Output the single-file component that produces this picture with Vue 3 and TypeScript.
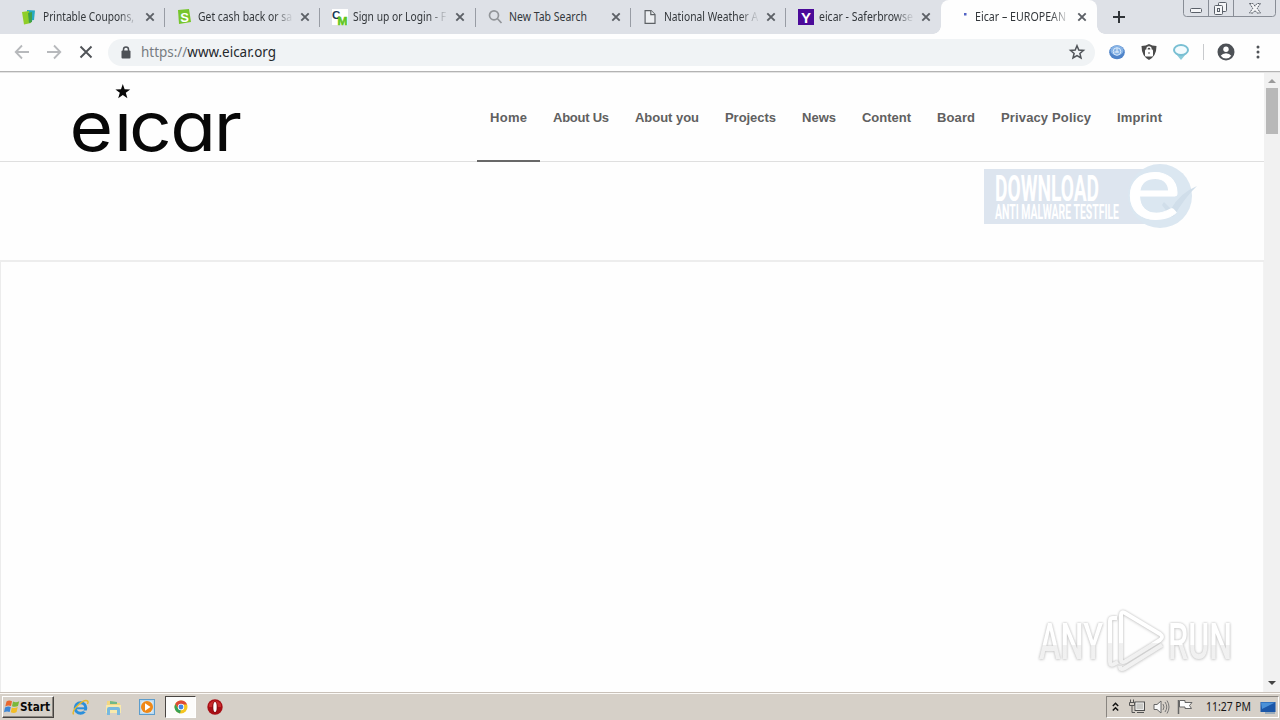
<script setup lang="ts">
interface Tab { icon: string; title: string; w: number; fade: boolean }
interface NavItem { label: string; w: number; active?: boolean }

const tabs: Tab[] = [
  { icon: 'coupon', title: 'Printable Coupons,', w: 91, fade: true },
  { icon: 'cash', title: 'Get cash back or sa', w: 94, fade: true },
  { icon: 'cm', title: 'Sign up or Login - F', w: 93, fade: true },
  { icon: 'search', title: 'New Tab Search', w: 78, fade: false },
  { icon: 'page', title: 'National Weather A', w: 94, fade: true },
  { icon: 'yahoo', title: 'eicar - Saferbrowse', w: 94, fade: true },
]
const nav: NavItem[] = [
  { label: 'Home', w: 37, active: true },
  { label: 'About Us', w: 56 },
  { label: 'About you', w: 64 },
  { label: 'Projects', w: 51 },
  { label: 'News', w: 34 },
  { label: 'Content', w: 49 },
  { label: 'Board', w: 38 },
  { label: 'Privacy Policy', w: 90 },
  { label: 'Imprint', w: 45 },
]
</script>

<template>
  <div class="screen">
    <header class="strip">
      <div v-for="t in tabs" :key="t.icon" class="tab">
        <svg class="fav" width="16" height="16" viewBox="0 0 16 16">
          <g v-if="t.icon === 'coupon'">
            <path d="M5 1 13 1.500 12 11 5 12Z" fill="#27a9c0" />
            <path d="M0 3 7 2 9 14 2 15.500Z" fill="#8fce28" />
            <path d="M6 4 10 3 10 13 7 14Z" fill="#3ea04b" />
          </g>
          <g v-else-if="t.icon === 'cash'">
            <path d="M1 1 12 0 14 13 2 15Z" fill="#76c62d" />
            <text x="7.500" y="12.500" text-anchor="middle" class="ico-t" font-size="13" fill="#fff">S</text>
          </g>
          <g v-else-if="t.icon === 'cm'">
            <rect width="16" height="16" fill="#fff" />
            <text x="0" y="9.500" class="ico-t" font-size="11.500" fill="#173a58">C</text>
            <text x="5.500" y="15.500" class="ico-t thick" font-size="11" fill="#5ec51c" textLength="10" lengthAdjust="spacingAndGlyphs">M</text>
          </g>
          <g v-else-if="t.icon === 'search'" fill="none" stroke="#929599" stroke-width="1.700">
            <circle cx="6" cy="6.300" r="4.500" /><path d="M9.300 9.500 13.500 14" />
          </g>
          <g v-else-if="t.icon === 'page'" fill="#eceef1" stroke="#5d6165" stroke-width="1.200">
            <path d="M2.100 1.600H8L12 5.500V14.400H2.100Z" /><path d="M7.800 1.600V5.700H12" />
          </g>
          <g v-else>
            <rect width="16" height="16" fill="#4b0a99" />
            <text x="8" y="13.500" text-anchor="middle" class="ico-t" font-size="15" fill="#fff">Y</text>
          </g>
        </svg>
        <svg class="title" :class="{ fade: t.fade }" width="94" height="18">
          <text x="0" y="13" :textLength="t.w" lengthAdjust="spacingAndGlyphs">{{ t.title }}</text>
        </svg>
        <svg class="close" width="10" height="10" viewBox="0 0 10 10"><path d="M1.300 1.300 8.700 8.700M8.700 1.300 1.300 8.700" /></svg>
      </div>
      <div class="tab active">
        <svg class="fav" width="16" height="16"><rect x="10" y="4" width="2.500" height="2.500" fill="#5263c4" /></svg>
        <svg class="title fade" width="94" height="18">
          <text x="0" y="13" textLength="91" lengthAdjust="spacingAndGlyphs">Eicar – EUROPEAN</text>
        </svg>
        <svg class="close" width="10" height="10" viewBox="0 0 10 10"><path d="M1.300 1.300 8.700 8.700M8.700 1.300 1.300 8.700" /></svg>
      </div>
      <svg class="plus" width="14" height="14" viewBox="0 0 14 14"><path d="M7 1V13M1 7H13" stroke="#303438" stroke-width="2" /></svg>
      <svg class="winctl" width="94" height="17" viewBox="0 0 94 17">
        <path d="M.5 0V13.500Q.5 16.500 3.500 16.500H89.500Q92.500 16.500 92.500 13.500V0M25.500 0V16M50.500 0V16" fill="none" stroke="#888d96" />
        <g fill="#f4f5f7" stroke="#5a6069">
          <rect x="7.500" y="8.500" width="11" height="4" rx="1" />
          <rect x="35.500" y="2.500" width="8" height="9" rx="1" />
          <rect x="31.500" y="5.500" width="8" height="9" rx="1" /><rect x="34.500" y="8.500" width="2" height="3" />
          <path d="M66.500 3.500H70L72 6.200 74 3.500H77.500L74.200 8.200 77.500 13H74L72 10.500 70 13H66.500L69.800 8.200Z" stroke-dasharray="2 .7" />
        </g>
      </svg>
    </header>

    <div class="toolbar">
      <svg class="back" width="16" height="16" viewBox="0 0 16 16"><path d="M15 8H2M8 1.500 1.700 8 8 14.500" fill="none" stroke="#b7b9bc" stroke-width="1.800" /></svg>
      <svg class="fwd" width="16" height="16" viewBox="0 0 16 16"><path d="M1 8H14M8 1.500 14.300 8 8 14.500" fill="none" stroke="#b7b9bc" stroke-width="1.800" /></svg>
      <svg class="stop" width="14" height="14" viewBox="0 0 14 14"><path d="M1.500 1.500 12.500 12.500M12.500 1.500 1.500 12.500" stroke="#505357" stroke-width="1.900" /></svg>
      <div class="omni">
        <svg class="lock" width="10" height="13" viewBox="0 0 10 13"><path d="M2.500 5V3.500Q2.500 1 5 1T7.500 3.500V5" fill="none" stroke="#4d5156" stroke-width="1.500" /><rect x=".5" y="4.500" width="9" height="8" rx="1" fill="#4d5156" /></svg>
        <svg class="url" width="140" height="22">
          <text x="0" y="16" textLength="135" lengthAdjust="spacingAndGlyphs"><tspan fill="#777c81">https://</tspan><tspan fill="#25282c">www.eicar.org</tspan></text>
        </svg>
        <svg class="star" width="16" height="16" viewBox="0 0 16 16"><path d="M8 1.700 9.800 6 14.500 6.400 10.900 9.500 12 14 8 11.600 4 14 5.100 9.500 1.500 6.400 6.200 6Z" fill="none" stroke="#505459" stroke-width="1.500" /></svg>
      </div>
      <svg class="ext" width="16" height="16" viewBox="0 0 16 16">
        <ellipse cx="8" cy="8.300" rx="7.800" ry="7" fill="#4f84c9" /><ellipse cx="8" cy="6.500" rx="6.500" ry="5" fill="#85b2e5" />
        <circle cx="8" cy="7.500" r="3.800" fill="none" stroke="#d9eafb" /><path d="M8 4V8.500M5.500 8H10" stroke="#e8f3fc" />
      </svg>
      <svg class="ext" width="16" height="16" viewBox="0 0 16 16">
        <path d="M.5 2Q5 2 8 0 11 2 15.500 2 15.500 12 8 16 .5 12 .5 2Z" fill="#4b4b4b" />
        <rect x="4" y="5.500" width="8" height="7" rx="1" fill="#fff" /><path d="M6 7V5Q6 3 8 3T10 5V7" fill="none" stroke="#fff" stroke-width="1.300" /><path d="M8 8V10" stroke="#555" />
      </svg>
      <svg class="ext" width="16" height="16" viewBox="0 0 16 16">
        <path d="M3 10H13L8 16Z" fill="#8bcbd9" /><ellipse cx="8" cy="6" rx="7" ry="4.900" fill="#f3fbfe" stroke="#79bfd3" stroke-width="2" />
      </svg>
      <i class="divider"></i>
      <svg class="avatar" width="18" height="18" viewBox="0 0 18 18"><circle cx="9" cy="9" r="8.500" fill="#4d5156" /><circle cx="9" cy="6.300" r="2.700" fill="#fff" /><path d="M3.700 12.700Q5.500 10.200 9 10.200T14.300 12.700Q12.300 15.500 9 15.500T3.700 12.700Z" fill="#fff" /></svg>
      <svg class="dots" width="4" height="14"><g fill="#505357"><circle cx="2" cy="2" r="1.500" /><circle cx="2" cy="7" r="1.500" /><circle cx="2" cy="12" r="1.500" /></g></svg>
    </div>

    <div class="view">
      <main class="page">
        <div class="site-head">
          <svg class="logo" width="190" height="84" viewBox="0 0 190 84">
            <text class="word" transform="scale(1.1 1)" y="78.500" x="8.700 49.200 62.800 100.200 139.800">eicar</text>
            <rect x="54" y="20" width="17" height="21" fill="#fefefe" />
            <path d="M62.800 11 64.600 16.300 70.200 16.400 65.800 19.800 67.400 25.200 62.800 22 58.200 25.200 59.800 19.800 55.400 16.400 61 16.300Z" fill="#080808" />
          </svg>
          <nav>
            <a v-for="n in nav" :key="n.label" :class="{ on: n.active }">
              <svg :width="n.w" height="20"><text x="0" y="14" :textLength="n.w" lengthAdjust="spacing">{{ n.label }}</text></svg>
            </a>
          </nav>
        </div>
        <div class="banner">
          <svg class="download" width="216" height="68" viewBox="0 0 216 68">
            <rect x="0" y="7" width="180" height="55" fill="#dde5ef" />
            <circle cx="176" cy="34" r="32" fill="#dbe7f1" />
            <path d="M180 40 187 47Q196 31 213 24 202 34 190 54L187 55 178 43Z" fill="#d0deea" />
            <g fill="#fff" class="dl">
              <text transform="translate(11 39) scale(1 1.900)" font-size="19" textLength="104" lengthAdjust="spacingAndGlyphs">DOWNLOAD</text>
              <text transform="translate(11 57) scale(1 1.550)" font-size="12.500" textLength="124" lengthAdjust="spacingAndGlyphs">ANTI MALWARE TESTFILE</text>
              <text class="big-e" transform="translate(142 56.500) scale(1 1.120)" font-size="82" textLength="55" lengthAdjust="spacingAndGlyphs">e</text>
            </g>
          </svg>
        </div>
        <div class="slider"></div>
      </main>
      <aside class="scroll">
        <svg width="8" height="5"><path d="M0 5 4 1 8 5Z" fill="#9a9a9a" /></svg>
        <i class="thumb"></i>
        <svg width="8" height="5"><path d="M0 0H8L4 4Z" fill="#444" /></svg>
      </aside>
    </div>

    <footer class="taskbar">
      <div class="start">
        <svg width="16" height="16" viewBox="0 0 16 16">
          <path d="M2.500 2.500Q5 .8 8 2.300L7 7Q4 6 1.300 7.500Z" fill="#e9682e" />
          <path d="M9 2.500Q12 4 15.200 2.300L14 7Q11 8.500 8 7.200Z" fill="#7ab83a" />
          <path d="M1 8.500Q4 7 6.800 8L5.700 13Q3 12 0 13.200Z" fill="#3d86d5" />
          <path d="M7.800 8.400Q10.500 9.700 13.700 8.100L12.600 13Q10 14.600 6.800 13.300Z" fill="#f3bd25" />
        </svg>
        <svg width="31" height="16"><text x="0" y="12" textLength="30" lengthAdjust="spacingAndGlyphs">Start</text></svg>
      </div>
      <svg class="app ie" width="17" height="17" viewBox="0 0 17 17">
        <circle cx="8.500" cy="9" r="5.300" fill="none" stroke="#2b8fdb" stroke-width="3" /><path d="M4 9.300H14" stroke="#2b8fdb" stroke-width="2" /><path d="M10 11.500H15V14Z" fill="#d6d0c8" />
        <path d="M1.500 15.500C-1 11 12-1 15.800 2.200 16.500 3 16 4 15.500 5" fill="none" stroke="#e7b92d" stroke-width="1.500" />
      </svg>
      <svg class="app folder" width="17" height="17" viewBox="0 0 17 17">
        <path d="M2 2H8L9 4H15V13H2Z" fill="#f2d783" /><path d="M1 6H16V14H1Z" fill="#f8e9ac" /><path d="M5 2V5H12V3Z" fill="#71b888" />
        <path d="M2 16V10Q2 8 4 8H13Q15 8 15 10V16H12V11H5V16Z" fill="#78b9df" />
      </svg>
      <svg class="app media" width="17" height="17" viewBox="0 0 17 17">
        <rect x=".5" y=".5" width="15" height="15" fill="#b9d9f0" stroke="#5d9dcc" /><rect x="2.500" y="2.500" width="11" height="11" fill="#e9f3f8" />
        <circle cx="8" cy="8" r="6" fill="#ef8817" /><path d="M6 4.300 11.500 8 6 11.700Z" fill="#fff" />
      </svg>
      <div class="pressed">
        <svg width="14" height="14" viewBox="0 0 14 14">
          <circle cx="7" cy="7" r="6.500" fill="#f5c51f" /><path d="M1.200 4A6.500 6.500 0 0 1 13 4.500H7L4.500 8.500Z" fill="#dd4936" />
          <path d="M1.200 4 4.500 9 7 9.500 6 13.400A6.500 6.500 0 0 1 1.200 4Z" fill="#37a156" /><circle cx="7" cy="7" r="3.200" fill="#fff" /><circle cx="7" cy="7" r="2.400" fill="#4285e4" />
        </svg>
      </div>
      <svg class="app opera" width="16" height="16" viewBox="0 0 16 16"><circle cx="8" cy="8" r="7.700" fill="#a80e15" /><path d="M2 5Q8-2 14 5V8H2Z" fill="#c92b2d" /><ellipse cx="8" cy="8" rx="2.800" ry="5.800" fill="#811013" /><ellipse cx="8" cy="8" rx="1.700" ry="5" fill="#fff" /></svg>
      <div class="tray">
        <svg class="chev" width="7" height="10" viewBox="0 0 7 10"><path d="M.8 4 3.500 1.300 6.200 4M.8 8.500 3.500 5.800 6.200 8.500" fill="none" stroke="#111" stroke-width="1.500" /></svg>
        <svg class="net" width="18" height="16" viewBox="0 0 18 16">
          <rect x="6" y="3" width="9.500" height="8.500" fill="#c9c9c6" stroke="#4e4e4e" /><rect x="7" y="4" width="7.500" height="6.500" fill="none" stroke="#f8f8f8" stroke-width=".7" />
          <path d="M1.500 .5V3M4.500 .5V3M.5 3.500H5.500V6.500H.5ZM3 7V13.500H6M8 13.500H15" fill="none" stroke="#555" />
        </svg>
        <svg class="vol" width="17" height="16" viewBox="0 0 17 16"><path d="M1 5.500H4L8 2V14L4 10.500H1Z" fill="#f7f7f7" stroke="#666" /><path d="M10 5Q12 8 10 11M12 3Q15.500 8 12 13M14 1.500Q18 8 14 14.500" fill="none" stroke="#777" /></svg>
        <svg class="flag" width="17" height="16" viewBox="0 0 17 16"><path d="M1.500 1V15" stroke="#666" stroke-width="1.500" /><path d="M2.500 1.500H8V3.500H15L12.500 6.500 14.500 9.500H8V8H2.500Z" fill="#fbfbfb" stroke="#666" /></svg>
        <svg class="clock" width="46" height="16"><text x="0" y="12" textLength="45" lengthAdjust="spacingAndGlyphs">11:27 PM</text></svg>
        <svg class="desk" width="16" height="13" viewBox="0 0 16 13"><rect x=".5" y="1" width="15" height="10" fill="#1c57a8" /><path d="M1 1.500H15L2 8Z" fill="#4b91d8" /><path d="M5 12H15" stroke="#5f87ad" /></svg>
      </div>
    </footer>

    <svg class="mark" width="206" height="70" viewBox="0 0 206 70">
      <defs>
        <linearGradient id="mg" x1="0" y1="0" x2="0" y2="1">
          <stop offset="0" stop-color="#fff" /><stop offset=".54" stop-color="#fff" /><stop offset=".55" stop-color="#f0f0f0" /><stop offset="1" stop-color="#f2f2f2" />
        </linearGradient>
      </defs>
      <g class="brand">
        <text transform="translate(6 54) scale(1 1.450)" font-size="35" textLength="64" lengthAdjust="spacingAndGlyphs">ANY</text>
        <text transform="translate(135 54) scale(1 1.450)" font-size="35" textLength="64" lengthAdjust="spacingAndGlyphs">RUN</text>
        <path d="M84 13H80Q77 13 77 16V57Q77 61 81 59L85 57M88 10Q88 6 92 8L127 29Q131 32 127 35L93 56Q88 59 88 54ZM129 40 92 63Q87 66 87 61" fill="none" stroke="url(#mg)" stroke-width="4" stroke-linejoin="round" />
      </g>
    </svg>
  </div>
</template>

<style>
body { overflow: hidden; background: #fff; }
</style>
<style scoped>
.screen { position: relative; width: 1280px; height: 720px; display: flex; flex-direction: column; background: #fefefe; font-family: "Liberation Sans", Arial, sans-serif; overflow: hidden; }
svg { display: block; flex: none; overflow: visible; }
.ico-t { font-family: "Liberation Sans", sans-serif; font-weight: 700; }
.thick { stroke: #5ec51c; stroke-width: .5; }
.strip { height: 34px; flex: none; background: #dee1e7; display: flex; padding-left: 9px; }
.tab { width: 155.400px; flex: none; box-sizing: border-box; height: 34px; padding-left: 12.500px; display: flex; align-items: center; position: relative; }
.tab:not(.active):not(:nth-child(6))::after { content: ""; position: absolute; right: -.5px; top: 8px; height: 19px; width: 1px; background: #989ca4; }
.title { margin-left: 5px; font-family: "Noto Sans", "DejaVu Sans", sans-serif; font-size: 11.800px; fill: #33373b; }
.fade { mask-image: linear-gradient(90deg, #000 76px, rgba(0,0,0,.15) 92px); }
.close { margin-left: 8px; stroke: #5c6066; stroke-width: 1.900; }
.active { background: #fefefe; border-radius: 8px 8px 0 0; width: 156px; }
.active::before, .active::after { content: ""; position: absolute; width: 8px; height: 8px; bottom: 0; }
.active::before { left: -8px; background: radial-gradient(circle at 0 0, transparent 7.500px, #fefefe 8px); }
.active::after { right: -8px; background: radial-gradient(circle at 100% 0, transparent 7.500px, #fefefe 8px); }
.plus { margin: 10px 0 0 15px; }
.winctl { margin-left: 57px; }
.toolbar { height: 36px; flex: none; padding-bottom: 1px; border-bottom: 1px solid #b3b3b3; box-shadow: 0 1px #e4e4e4; display: flex; align-items: center; position: relative; z-index: 1; }
.back { margin-left: 14px; }
.fwd { margin-left: 16px; }
.stop { margin-left: 17px; }
.omni { margin-left: 15px; width: 987px; height: 27px; border-radius: 14px; background: #f0f3f5; display: flex; align-items: center; }
.lock { margin-left: 13px; }
.url { margin-left: 10px; font: 15px "Noto Sans", sans-serif; }
.star { margin-left: auto; margin-right: 10px; }
.ext { margin-left: 14px; }
.ext + .ext { margin-left: 16px; }
.divider { width: 1px; height: 16px; background: #c8cacd; margin-left: 14px; }
.avatar { margin-left: 13px; }
.dots { margin-left: 21px; }
.view { height: 620px; flex: none; display: flex; }
.page { width: 1264px; display: flex; flex-direction: column; }
.site-head { height: 90px; box-sizing: border-box; flex: none; border-bottom: 1px solid #dfdfdf; display: flex; }
.logo { margin-left: 60px; margin-top: 1px; }
.word { font-family: Inter, sans-serif; font-weight: 400; font-size: 68px; fill: #080808; font-feature-settings: "cv11"; }
nav { margin-left: 227px; display: flex; }
nav a { padding: 36px 13px 0; height: 54px; font-size: 13px; font-weight: 700; fill: #606060; }
nav a.on { border-bottom: 2px solid #686868; height: 52px; }
.banner { height: 98px; flex: none; display: flex; border-bottom: 2px solid #ededed; }
.download { margin-left: 984px; }
.dl { font-family: Roboto, sans-serif; font-weight: 700; }
.big-e { font-family: Lato, sans-serif; font-weight: 400; stroke: #fff; stroke-width: .8; }
.slider { flex: 1; border-left: 1px solid #ececec; border-right: 1px solid #f3f3f3; }
.scroll { width: 16px; background: #f1f1f1; display: flex; flex-direction: column; align-items: center; padding-top: 6px; box-sizing: border-box; }
.thumb { width: 12px; height: 46px; background: #b8b8b8; margin-top: 5px; }
.scroll svg:last-child { margin-top: auto; margin-bottom: 6px; }
.taskbar { height: 28px; flex: none; box-sizing: border-box; border-top: 1px solid #c9c1b9; box-shadow: inset 0 1px #fcfaf7; background: #d6d0c8; display: flex; align-items: center; padding-bottom: 1px; padding-top: 2px; }
.start { margin-left: 2px; width: 52px; height: 22px; box-sizing: border-box; border: 1px solid; border-color: #fff #464340 #464340 #fff; box-shadow: inset -1px -1px #8b8680; display: flex; align-items: center; padding-left: 1px; }
.start text { font: 700 11.500px "DejaVu Sans", sans-serif; fill: #090909; }
.ie { margin-left: 18px; }
.folder { margin-left: 16px; }
.media { margin-left: 17px; }
.pressed { width: 31px; height: 22px; margin-left: 9px; background: #fcfcfb; border: 1px solid; border-color: #494542 #fff #fff #494542; box-sizing: border-box; display: flex; align-items: center; justify-content: center; }
.opera { margin-left: 11px; }
.tray { margin-left: auto; width: 173px; height: 22px; margin-right: 1px; box-sizing: border-box; border: 1px solid; border-color: #898580 #fff #fff #898580; display: flex; align-items: center; }
.chev { margin-left: 5px; }
.net { margin-left: 10px; }
.vol { margin-left: 6px; }
.flag { margin-left: 7px; }
.clock { margin-left: 12px; font: 12px "Noto Sans", sans-serif; fill: #161616; }
.desk { margin-left: 8px; }
.mark { position: absolute; left: 1033px; top: 605px; }
.brand { fill: url(#mg); font-family: Roboto, sans-serif; font-weight: 500; filter: drop-shadow(0 0 1.300px #bcbcbc) drop-shadow(0 1px 1px #e6e6e6); }
</style>
